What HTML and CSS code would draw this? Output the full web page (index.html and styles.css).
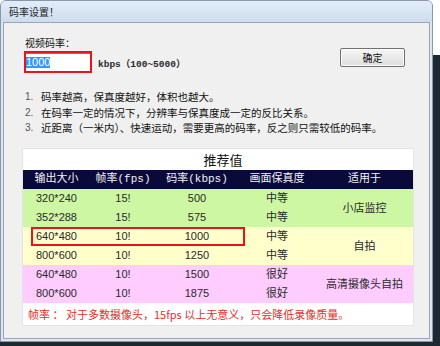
FILE: index.html
```html
<!DOCTYPE html>
<html lang="zh">
<head>
<meta charset="utf-8">
<title>码率设置</title>
<link rel="stylesheet" href="styles.css">
</head>
<body>
<div class="desk"></div>
<div class="window">
  <div class="titlebar">码率设置！</div>
  <div class="content">
    <div class="top">
      <div class="field">
        <div class="label">视频码率：</div>
        <div class="inputrow">
          <div class="input"><span class="sel">1000</span></div>
          <span class="unit">kbps（100~5000）</span>
        </div>
      </div>
      <button class="btn">确定</button>
    </div>
    <ol class="notes">
      <li><span class="num">1.</span><span>码率越高，保真度越好，体积也越大。</span></li>
      <li><span class="num">2.</span><span>在码率一定的情况下，分辨率与保真度成一定的反比关系。</span></li>
      <li><span class="num">3.</span><span>近距离（一米内）、快速运动，需要更高的码率，反之则只需较低的码率。</span></li>
    </ol>
    <div class="panel">
      <div class="ptitle">推荐值</div>
      <table class="rec">
        <colgroup>
          <col class="c1"><col class="c2"><col class="c3"><col class="c4"><col class="c5">
        </colgroup>
        <thead>
          <tr><th>输出大小</th><th>帧率(fps)</th><th>码率(kbps)</th><th>画面保真度</th><th>适用于</th></tr>
        </thead>
        <tbody>
          <tr class="green"><td>320*240</td><td>15!</td><td>500</td><td>中等</td><td rowspan="2">小店监控</td></tr>
          <tr class="green"><td>352*288</td><td>15!</td><td>575</td><td>中等</td></tr>
          <tr class="yellow"><td>640*480</td><td>10!</td><td>1000</td><td>中等</td><td rowspan="2">自拍</td></tr>
          <tr class="yellow"><td>800*600</td><td>10!</td><td>1250</td><td>中等</td></tr>
          <tr class="pink"><td>640*480</td><td>10!</td><td>1500</td><td>很好</td><td rowspan="2">高清摄像头自拍</td></tr>
          <tr class="pink"><td>800*600</td><td>10!</td><td>1875</td><td>很好</td></tr>
        </tbody>
      </table>
      <div class="foot">帧率 ： 对于多数摄像头，15fps 以上无意义，只会降低录像质量。</div>
      <div class="mark"></div>
    </div>
  </div>
</div>
</body>
</html>
```
FILE: styles.css
```css
html, body {
  margin: 0;
  padding: 0;
}
body {
  width: 440px;
  height: 346px;
  overflow: hidden;
  background: #ffffff;
  position: relative;
  font-family: "Liberation Sans", "Noto Sans CJK SC", sans-serif;
  color: #1a1a1a;
}
.desk {
  position: absolute;
  top: 55px;
  left: 0;
  right: 0;
  bottom: 0;
  background: #1e2832;
}
.window {
  position: relative;
  z-index: 1;
  box-sizing: border-box;
  width: 433px;
  height: 342px;
  border: 1px solid #8898aa;
  border-radius: 6px 6px 0 0;
  background: #dce6f0;
  padding: 0 2px 2px 2px;
  display: flex;
  flex-direction: column;
}
.titlebar {
  height: 21px;
  line-height: 21px;
  font-size: 10px;
  font-family: "Noto Sans CJK SC", sans-serif;
  color: #1e1e1e;
  background: linear-gradient(#e2edf8, #cddcee);
  border-radius: 5px 5px 0 0;
  margin: 0 -2px;
  padding-left: 8px;
}
.content {
  flex: 1;
  border: 1px solid #9ba6b2;
  background: #f0f0f0;
  display: flex;
  flex-direction: column;
}
.top {
  display: flex;
  align-items: flex-start;
  padding-top: 13px;
}
.field {
  padding-left: 20px;
}
.label {
  margin-left: 1px;
  font-size: 10px;
  line-height: 14px;
  font-family: "Noto Sans CJK SC", sans-serif;
  margin-bottom: 1px;
  color: #111;
}
.inputrow {
  display: flex;
  align-items: center;
}
.input {
  box-sizing: border-box;
  width: 68px;
  height: 22px;
  border: 2px solid #e8141c;
  background: #ffffff;
  box-shadow: inset 0 1px 0 #7d7d7d;
  padding-top: 4px;
}
.sel {
  display: inline-block;
  font-size: 11px;
  line-height: 11px;
  background: #3399ff;
  color: #ffffff;
  vertical-align: top;
}
.unit {
  margin-left: 6px;
  font-family: "Liberation Mono", "Noto Sans CJK SC", monospace;
  font-size: 9.5px;
  font-weight: bold;
  color: #2a2a2a;
  margin-top: 2px;
}
.btn {
  margin-left: auto;
  margin-right: 24px;
  margin-top: 12px;
  width: 65px;
  height: 19px;
  padding: 0;
  border: 1px solid #707070;
  border-radius: 2px;
  background: linear-gradient(#f6f6f6, #dddddd);
  box-shadow: inset 0 0 0 1px #fbfbfb;
  font-family: "Noto Sans CJK SC", sans-serif;
  font-size: 10px;
  color: #111;
}
.notes {
  list-style: none;
  margin: 16px 0 0 0;
  padding: 0 0 0 21px;
  font-size: 10.5px;
  line-height: 15.5px;
  font-family: "Noto Sans CJK SC", sans-serif;
  color: #111;
}
.notes li {
  display: flex;
}
.num {
  width: 16px;
  color: #555;
  font-family: "Liberation Sans", sans-serif;
  font-size: 10px;
}
.panel {
  position: relative;
  margin: 12.5px 15px 0 18px;
  background: #ffffff;
  border: 1px solid #e4e4e4;
}
.ptitle {
  height: 21px;
  line-height: 22px;
  text-align: center;
  padding-left: 10px;
  font-size: 13px;
  font-family: "Noto Sans CJK SC", sans-serif;
  color: #111;
}
.rec {
  width: 390px;
  border-collapse: collapse;
  table-layout: fixed;
}
.c1 { width: 67px; }
.c2 { width: 66px; }
.c3 { width: 82px; }
.c4 { width: 78px; }
.c5 { width: 97px; }
.rec th {
  height: 19px;
  padding: 0;
  background: #0a0a3a;
  color: #f2f2f2;
  font-weight: normal;
  font-size: 11px;
  line-height: 19px;
  font-family: "Liberation Mono", "Noto Sans CJK SC", monospace;
}
.rec td {
  height: 19px;
  padding: 0;
  text-align: center;
  font-size: 11px;
  line-height: 19px;
  color: #2a2a2a;
}
.green td { background: #cdf7a3; }
.yellow td { background: #ffffcc; }
.pink td { background: #ffccff; }
.foot {
  height: 22px;
  line-height: 22px;
  padding-left: 5px;
  color: #e3302a;
  font-size: 11px;
  font-family: "Noto Sans CJK SC", sans-serif;
}
.mark {
  position: absolute;
  left: 8px;
  top: 78px;
  width: 214px;
  height: 19px;
  box-sizing: border-box;
  border: 2px solid #e8141c;
}
```
